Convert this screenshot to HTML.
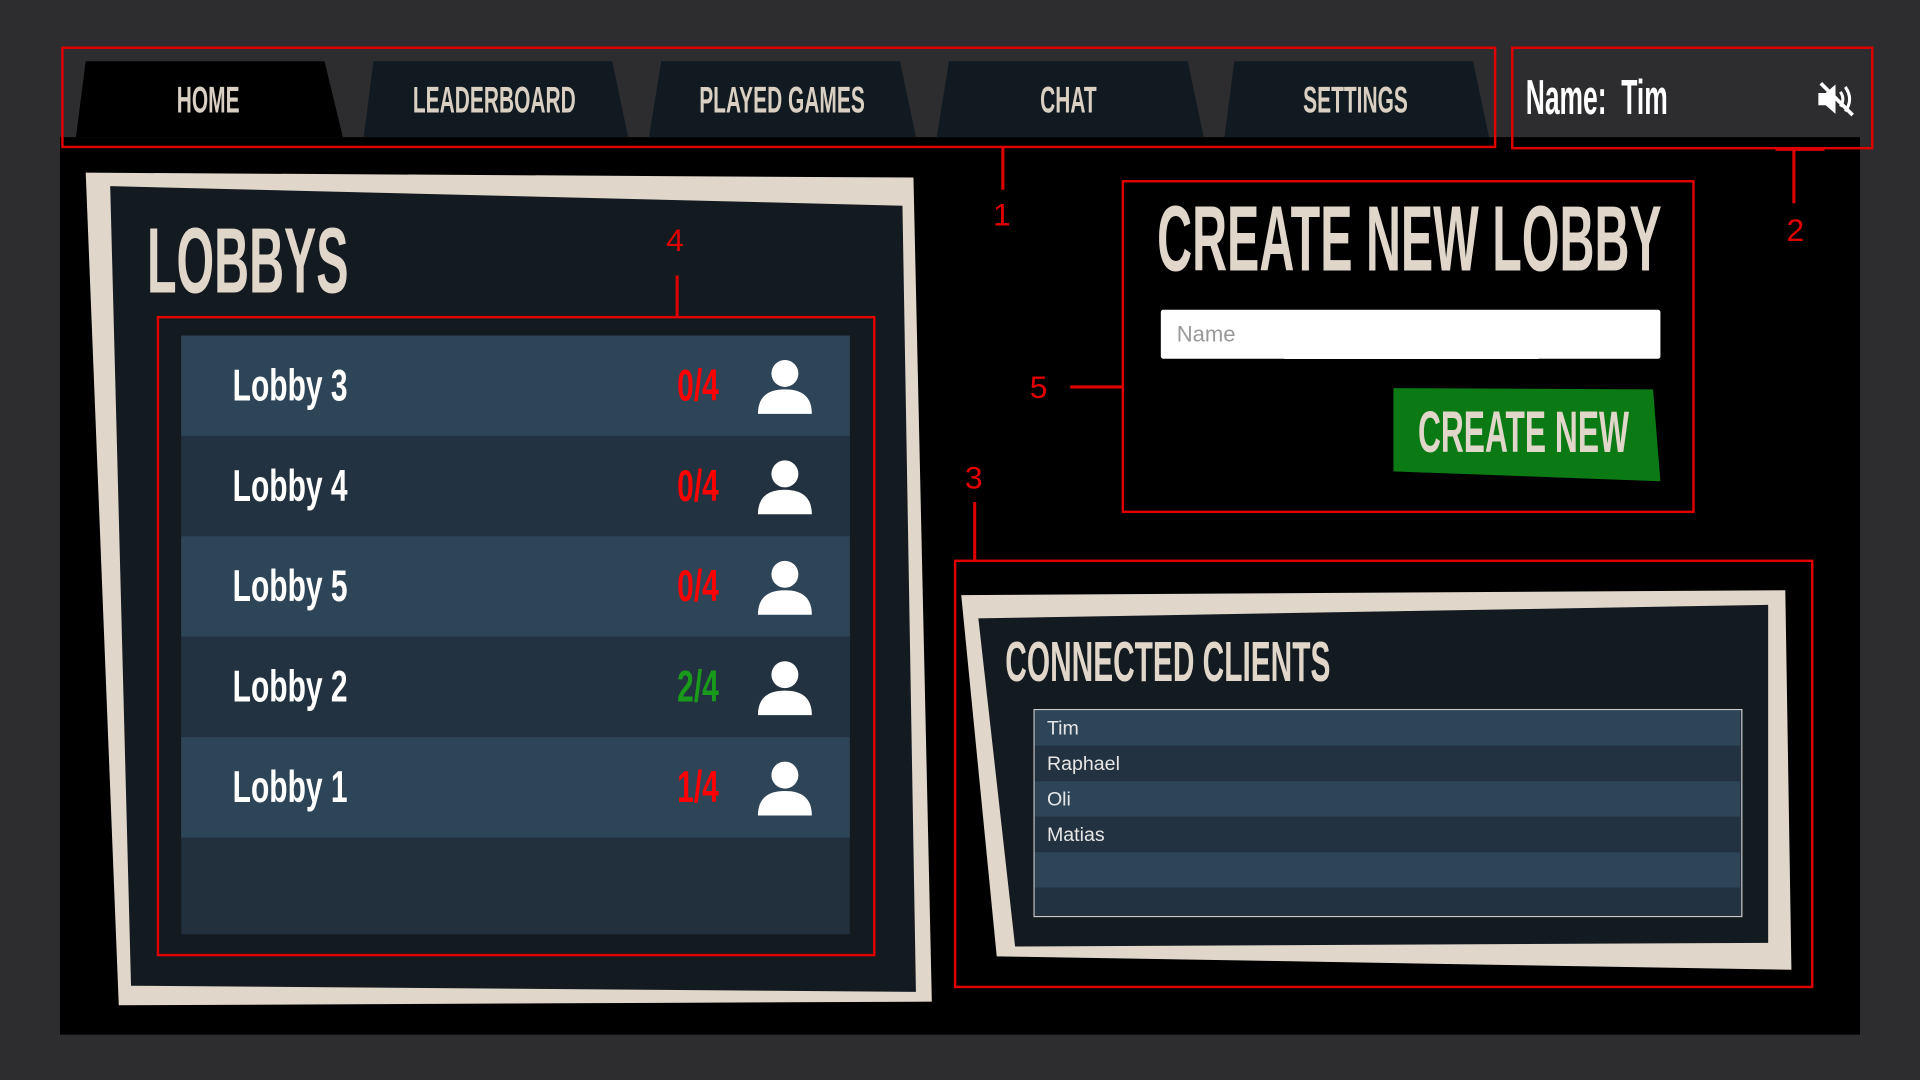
<!DOCTYPE html>
<html><head><meta charset="utf-8"><style>
html,body{margin:0;padding:0;width:1920px;height:1080px;overflow:hidden;background:#2d2d2f;}
#s{position:absolute;left:0;top:0;width:1568px;height:882px;transform:scale(1.22449);transform-origin:0 0;font-family:"Liberation Sans Narrow","Liberation Sans",sans-serif;}
.a{position:absolute;white-space:nowrap;}
.rb{position:absolute;border:2px solid #e00000;box-sizing:border-box;}
.c{display:inline-block;transform:scaleX(.68);transform-origin:0 50%;white-space:nowrap;font-weight:bold;}
.tab{position:absolute;top:66px;color:#d9cfc2;font-size:30px;width:400px;margin-left:-100px;text-align:center;white-space:nowrap;}
.tab span{display:inline-block;transform:scaleX(.57);font-weight:bold;}
.row{position:absolute;left:148px;width:546px;height:82px;}
.row .n{position:absolute;left:42px;top:20px;color:#fff;font-size:36px;}
.row .k{position:absolute;left:405px;top:20px;font-size:36px;}
.lbl{position:absolute;color:#e00000;font-family:"Liberation Sans",sans-serif;font-size:26px;}
.cl{position:absolute;left:0;width:576px;height:29px;color:#e6e6e6;font-family:"Liberation Sans",sans-serif;font-size:16px;line-height:31px;padding-left:10px;box-sizing:border-box;}
</style></head><body><div id="s">
<div class="a" style="left:49px;top:112px;width:1470px;height:733px;background:#000"></div>
<svg class="a" style="left:0;top:0" width="1568" height="882">
<polygon points="70,50 265,50 280,112 62,112" fill="#000"/>
<polygon points="305,50 500,50 513,112 297,112" fill="#111a20"/>
<polygon points="540,50 735,50 748,112 530,112" fill="#111a20"/>
<polygon points="775,50 970,50 983,112 765,112" fill="#111a20"/>
<polygon points="1008,50 1203,50 1216,112 1000,112" fill="#111a20"/>
<polygon points="70,141 746,145 761,818 97,821" fill="#e0d6ca"/>
<polygon points="90,152 737,168 748,810 107,805" fill="#131a20"/>
<polygon points="785,486 1458,482 1463,792 814,781" fill="#e0d6ca"/>
<polygon points="799,505 1444,494 1444,770 829,773" fill="#131a20"/>
<polygon points="1138,317 1350,318 1356,393 1138,385" fill="#0c7a14"/>
<g stroke="#e00000" stroke-width="2.5" fill="none">
<line x1="819" y1="120" x2="819" y2="155"/>
<line x1="1465" y1="121" x2="1465" y2="166"/><line x1="1450" y1="122" x2="1490" y2="122"/>
<line x1="553" y1="225" x2="553" y2="258"/>
<line x1="874" y1="316" x2="916" y2="316"/>
<line x1="796" y1="410" x2="796" y2="457"/>
</g>
</svg>
<div class="rb" style="left:50px;top:38px;width:1172px;height:83px"></div>
<div class="rb" style="left:1234px;top:38px;width:296px;height:84px"></div>
<div class="tab" style="left:70px"><span>HOME</span></div>
<div class="tab" style="left:304px"><span>LEADERBOARD</span></div>
<div class="tab" style="left:539px"><span>PLAYED GAMES</span></div>
<div class="tab" style="left:773px"><span>CHAT</span></div>
<div class="tab" style="left:1007px"><span>SETTINGS</span></div>
<div class="a" style="left:1246px;top:58px;color:#fff;font-size:40px"><span class="c" style="transform:scaleX(.54)">Name:&nbsp; Tim</span></div>
<svg class="a" style="left:1483px;top:66px" width="32" height="30" viewBox="0 0 32 30"><path d="M2 10h6l8-7v24l-8-7H2z" fill="#fff"/><path d="M20 9q4 6 0 12M24 5q7 10 0 20" stroke="#fff" stroke-width="2.5" fill="none"/><line x1="4" y1="2" x2="30" y2="28" stroke="#fff" stroke-width="3"/></svg>
<div class="lbl" style="left:811px;top:160px">1</div>
<div class="lbl" style="left:1459px;top:173px">2</div>
<div class="lbl" style="left:544px;top:181px">4</div>
<div class="lbl" style="left:841px;top:301px">5</div>
<div class="lbl" style="left:788px;top:375px">3</div>
<div class="a" style="left:120px;top:170px;color:#e0d6ca;font-size:76px"><span class="c" style="transform:scaleX(.52)">LOBBYS</span></div>
<div class="rb" style="left:128px;top:258px;width:587px;height:523px"></div>
<div class="a" style="left:148px;top:274px;width:546px;height:489px;background:#22303d"></div>
<div class="row" style="top:274px;background:#2e4558"><div class="n"><span class="c">Lobby 3</span></div><div class="k" style="color:#f00"><span class="c">0/4</span></div></div>
<div class="row" style="top:356px;background:#233240"><div class="n"><span class="c">Lobby 4</span></div><div class="k" style="color:#f00"><span class="c">0/4</span></div></div>
<div class="row" style="top:438px;background:#2e4558"><div class="n"><span class="c">Lobby 5</span></div><div class="k" style="color:#f00"><span class="c">0/4</span></div></div>
<div class="row" style="top:520px;background:#233240"><div class="n"><span class="c">Lobby 2</span></div><div class="k" style="color:#1a9a1a"><span class="c">2/4</span></div></div>
<div class="row" style="top:602px;background:#2e4558"><div class="n"><span class="c">Lobby 1</span></div><div class="k" style="color:#f00"><span class="c">1/4</span></div></div>
<svg class="a" style="left:618px;top:292px" width="46" height="400" viewBox="0 0 46 400">
<g fill="#fff" id="p"><circle cx="23" cy="13" r="11"/><path d="M1 46q0-20 22-20q22 0 22 20z"/></g>
<use href="#p" y="82"/><use href="#p" y="164"/><use href="#p" y="246"/><use href="#p" y="328"/>
</svg>
<div class="rb" style="left:916px;top:147px;width:468px;height:272px"></div>
<div class="a" style="left:945px;top:152px;color:#e0d6ca;font-size:76px"><span class="c" style="transform:scaleX(.52)">CREATE NEW LOBBY</span></div>
<div class="a" style="left:948px;top:253px;width:408px;height:40px;background:#fff;border-radius:2px"></div>
<div class="a" style="left:961px;top:263px;color:#9a9a9a;font-family:'Liberation Sans',sans-serif;font-size:18px">Name</div>
<div class="a" style="left:1158px;top:326px;color:#e0d6ca;font-size:48px"><span class="c" style="transform:scaleX(.54)">CREATE NEW</span></div>
<div class="rb" style="left:779px;top:457px;width:702px;height:350px"></div>
<div class="a" style="left:821px;top:513px;color:#e0d6ca;font-size:46px"><span class="c" style="transform:scaleX(.53)">CONNECTED CLIENTS</span></div>
<div class="a" style="left:844px;top:579px;width:579px;height:170px;border:1.5px solid #c8c8c8;box-sizing:border-box;background:#22303d;overflow:hidden">
<div class="cl" style="top:0;background:#2e4558">Tim</div>
<div class="cl" style="top:29px;background:#233240">Raphael</div>
<div class="cl" style="top:58px;background:#2e4558">Oli</div>
<div class="cl" style="top:87px;background:#233240">Matias</div>
<div class="cl" style="top:116px;background:#2e4558"></div>
<div class="cl" style="top:145px;background:#233240"></div>
</div>
</div></body></html>
